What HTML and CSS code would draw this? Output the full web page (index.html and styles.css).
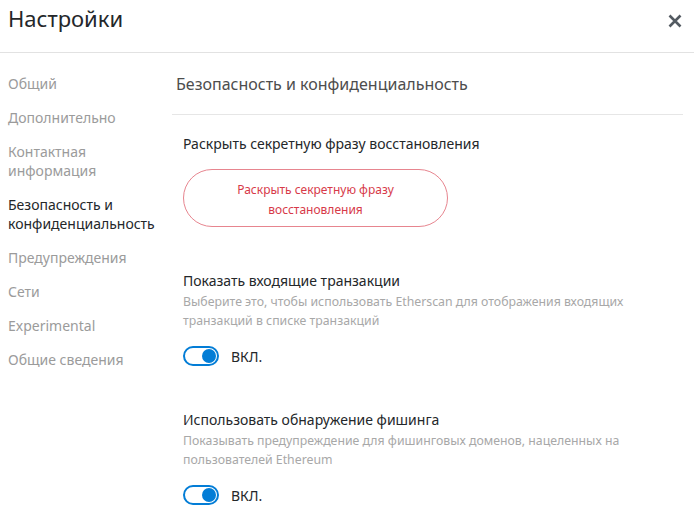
FILE: index.html
```html
<!DOCTYPE html>
<html lang="ru">
<head>
<meta charset="utf-8">
<link rel="stylesheet" href="styles.css">
</head>
<body>
<div class="page">
  <header class="header">
    <h1 class="title">Настройки</h1>
    <button class="close" aria-label="close">
      <svg width="14" height="14" viewBox="0 0 14 14"><path d="M1.5 1.5 L12.5 12.5 M12.5 1.5 L1.5 12.5" stroke="#535a61" stroke-width="2.6" stroke-linecap="butt"/></svg>
    </button>
  </header>
  <div class="main">
    <nav class="sidebar">
      <div class="nav-item">Общий</div>
      <div class="nav-item">Дополнительно</div>
      <div class="nav-item">Контактная<br>информация</div>
      <div class="nav-item active">Безопасность и<br>конфиденциальность</div>
      <div class="nav-item">Предупреждения</div>
      <div class="nav-item">Сети</div>
      <div class="nav-item">Experimental</div>
      <div class="nav-item">Общие сведения</div>
    </nav>
    <section class="content">
      <h2 class="content-title">Безопасность и конфиденциальность</h2>
      <div class="settings">
        <div class="setting">
          <div class="setting-title">Раскрыть секретную фразу восстановления</div>
          <button class="reveal-btn">Раскрыть секретную фразу<br>восстановления</button>
        </div>
        <div class="setting toggle-setting">
          <div class="setting-title">Показать входящие транзакции</div>
          <div class="setting-desc">Выберите это, чтобы использовать Etherscan для отображения входящих транзакций в списке транзакций</div>
          <div class="toggle-row">
            <span class="toggle"><span class="knob"></span></span>
            <span class="toggle-label">ВКЛ.</span>
          </div>
        </div>
        <div class="setting toggle-setting">
          <div class="setting-title">Использовать обнаружение фишинга</div>
          <div class="setting-desc">Показывать предупреждение для фишинговых доменов, нацеленных на пользователей Ethereum</div>
          <div class="toggle-row">
            <span class="toggle"><span class="knob"></span></span>
            <span class="toggle-label">ВКЛ.</span>
          </div>
        </div>
      </div>
    </section>
  </div>
</div>
</body>
</html>
```

FILE: styles.css
```css
* { box-sizing: border-box; }
html, body { margin: 0; padding: 0; background: #fff; }
body {
  font-family: "Noto Sans", "Liberation Sans", sans-serif;
  color: #24272a;
  overflow: hidden;
}
.page { width: 694px; height: 515px; }
.header {
  height: 53px;
  border-bottom: 1px solid #e2e2e2;
  display: flex;
  justify-content: space-between;
  align-items: flex-start;
  padding: 0 12px 0 8px;
}
.title {
  margin: 0;
  font-size: 22px;
  font-weight: 400;
  line-height: 30px;
  padding-top: 3px;
  color: #24272a;
}
.close {
  border: 0;
  background: none;
  padding: 0;
  margin-top: 14px;
  width: 14px;
  height: 14px;
  display: flex;
}
.main { display: flex; }
.sidebar {
  width: 172px;
  flex: none;
  padding: 21px 0 0 8px;
  display: flex;
  flex-direction: column;
  gap: 15px;
}
.nav-item {
  font-size: 14px;
  line-height: 19px;
  color: #9b9b9b;
  white-space: nowrap;
}
.nav-item.active { color: #24272a; }
.content {
  flex: 1;
  padding-right: 11px;
}
.content-title {
  margin: 0;
  font-size: 16px;
  font-weight: 400;
  line-height: 22px;
  padding: 20px 0 0 4px;
  height: 62px;
  color: #4d4d4d;
  border-bottom: 1px solid #e6e6e6;
}
.settings {
  padding: 19px 0 0 11px;
  display: flex;
  flex-direction: column;
  gap: 44px;
}
.setting { display: flex; flex-direction: column; }
.setting-title {
  font-size: 14px;
  line-height: 20px;
  color: #24272a;
}
.reveal-btn {
  margin-top: 15px;
  width: 265px;
  height: 58px;
  border: 1px solid #e7858f;
  border-radius: 29px;
  background: #fff;
  color: #d73a49;
  font-family: inherit;
  font-size: 12px;
  line-height: 20px;
  padding: 3px 0 0;
}
.setting-desc {
  font-size: 12.3px;
  line-height: 19px;
  color: #a8a8a8;
  width: 470px;
  margin-top: 1px;
}
.toggle-row {
  display: flex;
  align-items: center;
  gap: 12px;
  margin-top: 16px;
}
.toggle {
  width: 36px;
  height: 20px;
  border: 2px solid #037dd6;
  border-radius: 10px;
  position: relative;
  display: block;
}
.knob {
  position: absolute;
  width: 14px;
  height: 14px;
  border-radius: 50%;
  background: #037dd6;
  right: 1px;
  top: 1px;
}
.toggle-label {
  font-size: 14px;
  color: #24272a;
}
```
